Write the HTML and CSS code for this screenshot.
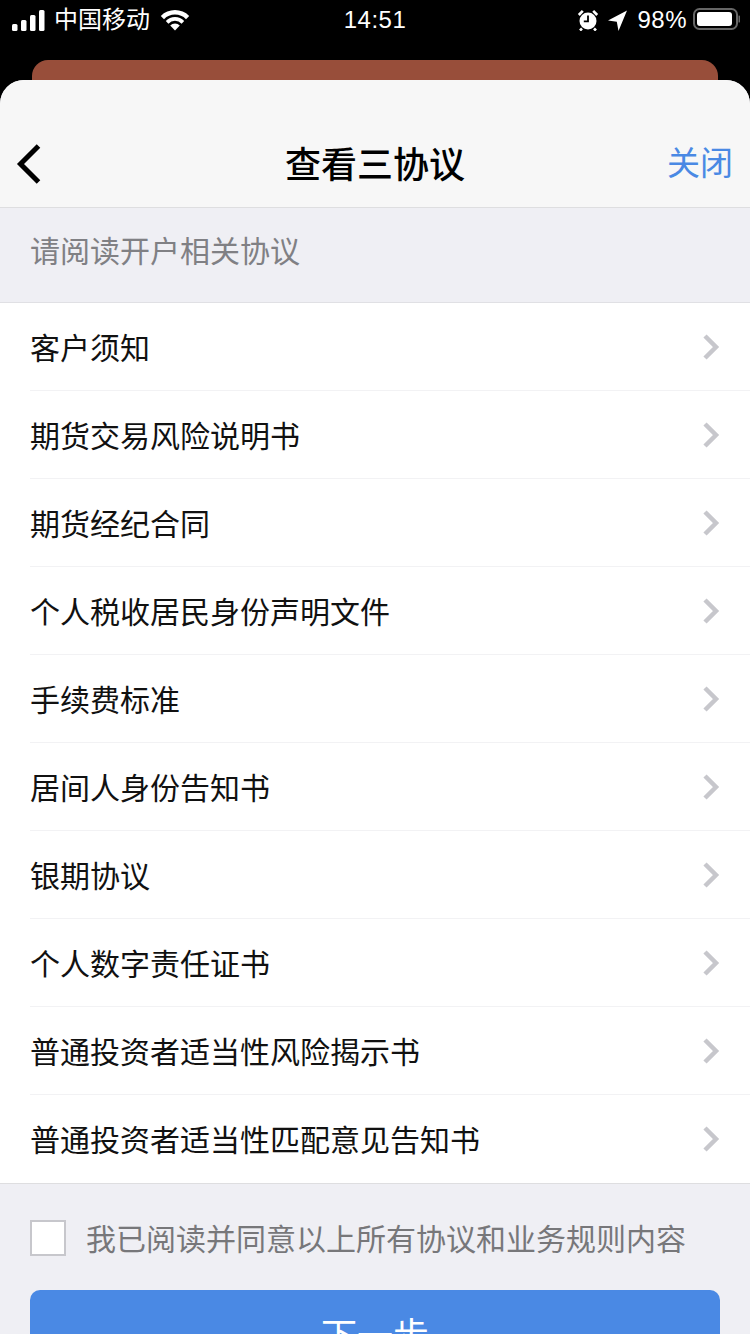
FILE: index.html
```html
<!DOCTYPE html>
<html lang="zh">
<head>
<meta charset="utf-8">
<title>查看三协议</title>
<link rel="stylesheet" href="styles.css">
</head>
<body>
<div class="page">
  <div class="status">
    <div class="status-left">
      <svg class="signal" width="34" height="22" viewBox="0 0 34 22"><rect x="0" y="14" width="5.500" height="7" rx="1.500"/><rect x="9" y="10" width="5.500" height="11" rx="1.500"/><rect x="18" y="5" width="5.500" height="16" rx="1.500"/><rect x="27" y="0" width="5.500" height="21" rx="1.500"/></svg>
      <span class="carrier">中国移动</span>
      <svg class="wifi" width="30" height="22" viewBox="0 0 30 22"><path d="M15 21.500l-4.800-5a6.600 6.600 0 0 1 9.600 0z"/><path d="M8.400 14.700l-2.600-2.700a12.800 12.800 0 0 1 18.400 0l-2.600 2.700a9 9 0 0 0-13.200 0z"/><path d="M4 10.200L.8 6.900a20 20 0 0 1 28.400 0L26 10.200a15.500 15.500 0 0 0-22 0z"/></svg>
    </div>
    <div class="time">14:51</div>
    <div class="status-right">
      <svg width="22" height="22" viewBox="0 0 22 22"><circle cx="11" cy="12" r="8.500" fill="#fff"/><path d="M11 6.500v5.800H6.800" fill="none" stroke="#000" stroke-width="1.800"/><path d="M1.800 6l4-4.200M20.200 6l-4-4.200M5 19.500L3 21.500M17 19.500l2 2" stroke="#fff" stroke-width="2.600"/></svg>
      <svg class="loc" width="20" height="22" viewBox="0 0 20 22"><path d="M20 1.500L1 11.500l8.800 1.200L11.500 22z" fill="#fff"/></svg>
      <span class="pct">98%</span>
      <svg class="batt" width="48" height="24" viewBox="0 0 48 24"><rect x="2" y="1" width="43" height="20" rx="5.500" fill="none" stroke="#666" stroke-width="2"/><rect x="5" y="4" width="35" height="14" rx="3" fill="#fff"/><path d="M46.500 7.500a3.500 3.500 0 0 1 0 7z" fill="#666"/></svg>
    </div>
  </div>
  <div class="peek"></div>
  <main class="sheet">
    <header class="nav">
      <svg class="back" width="28" height="42" viewBox="0 0 28 42"><path d="M24.500 3L6.500 21l18 18" fill="none" stroke="#000" stroke-width="5"/></svg>
      <h1 class="title">查看三协议</h1>
      <span class="close">关闭</span>
    </header>
    <div class="section-head">请阅读开户相关协议</div>
    <ul class="list">
      <li class="row"><span>客户须知</span><svg class="chev" width="18" height="26" viewBox="0 0 18 26"><path d="M2 2l11 11L2 24" fill="none" stroke="#c7c7cc" stroke-width="4.500"/></svg></li>
      <li class="row"><span>期货交易风险说明书</span><svg class="chev" width="18" height="26" viewBox="0 0 18 26"><path d="M2 2l11 11L2 24" fill="none" stroke="#c7c7cc" stroke-width="4.500"/></svg></li>
      <li class="row"><span>期货经纪合同</span><svg class="chev" width="18" height="26" viewBox="0 0 18 26"><path d="M2 2l11 11L2 24" fill="none" stroke="#c7c7cc" stroke-width="4.500"/></svg></li>
      <li class="row"><span>个人税收居民身份声明文件</span><svg class="chev" width="18" height="26" viewBox="0 0 18 26"><path d="M2 2l11 11L2 24" fill="none" stroke="#c7c7cc" stroke-width="4.500"/></svg></li>
      <li class="row"><span>手续费标准</span><svg class="chev" width="18" height="26" viewBox="0 0 18 26"><path d="M2 2l11 11L2 24" fill="none" stroke="#c7c7cc" stroke-width="4.500"/></svg></li>
      <li class="row"><span>居间人身份告知书</span><svg class="chev" width="18" height="26" viewBox="0 0 18 26"><path d="M2 2l11 11L2 24" fill="none" stroke="#c7c7cc" stroke-width="4.500"/></svg></li>
      <li class="row"><span>银期协议</span><svg class="chev" width="18" height="26" viewBox="0 0 18 26"><path d="M2 2l11 11L2 24" fill="none" stroke="#c7c7cc" stroke-width="4.500"/></svg></li>
      <li class="row"><span>个人数字责任证书</span><svg class="chev" width="18" height="26" viewBox="0 0 18 26"><path d="M2 2l11 11L2 24" fill="none" stroke="#c7c7cc" stroke-width="4.500"/></svg></li>
      <li class="row"><span>普通投资者适当性风险揭示书</span><svg class="chev" width="18" height="26" viewBox="0 0 18 26"><path d="M2 2l11 11L2 24" fill="none" stroke="#c7c7cc" stroke-width="4.500"/></svg></li>
      <li class="row"><span>普通投资者适当性匹配意见告知书</span><svg class="chev" width="18" height="26" viewBox="0 0 18 26"><path d="M2 2l11 11L2 24" fill="none" stroke="#c7c7cc" stroke-width="4.500"/></svg></li>
    </ul>
    <footer class="foot">
      <label class="agree"><span class="box"></span><span class="agree-text">我已阅读并同意以上所有协议和业务规则内容</span></label>
      <button class="next">下一步</button>
    </footer>
  </main>
</div>
</body>
</html>
```
FILE: styles.css
```css
* { box-sizing: border-box; }
html, body { margin: 0; padding: 0; background: #000; }
body { font-family: "Liberation Sans", "Noto Sans CJK SC", sans-serif; }
.page { width: 750px; height: 1334px; overflow: hidden; display: flex; flex-direction: column; }
.status { height: 60px; flex: none; position: relative; display: flex; justify-content: space-between; align-items: flex-start; padding: 8px 10px 0 12px; color: #fff; }
.status-left { display: flex; align-items: center; height: 24px; }
.signal { fill: #fff; margin-top: 1px; }
.carrier { font-size: 24px; margin-left: 8px; line-height: 24px; }
.wifi { fill: #fff; margin-left: 10px; }
.time { position: absolute; left: 0; right: 0; top: 8px; text-align: center; font-size: 24px; line-height: 24px; letter-spacing: 0.5px; }
.status-right { display: flex; align-items: center; height: 24px; }
.loc { margin-left: 8px; }
.pct { font-size: 24px; line-height: 24px; margin-left: 10px; letter-spacing: 0.5px; }
.batt { margin-left: 5px; }
.peek { height: 20px; flex: none; margin: 0 32px; background: #984e3a; border-radius: 16px 16px 0 0; }
.sheet { flex: 1; min-height: 0; background: #efeff4; border-radius: 24px 24px 0 0; overflow: hidden; display: flex; flex-direction: column; }
.nav { height: 128px; flex: none; background: #f7f7f7; border-bottom: 1px solid #dedee0; display: flex; align-items: center; justify-content: space-between; padding: 41px 17px 0 14px; position: relative; }
.back { display: block; }
.title { position: absolute; left: 0; right: 0; top: 64px; margin: 0; text-align: center; font-size: 36px; line-height: 44px; font-weight: 500; color: #000; }
.close { font-size: 33px; line-height: 44px; color: #4a89e4; }
.section-head { height: 95px; flex: none; padding: 0 30px 12px; display: flex; align-items: center; font-size: 30px; color: #808084; border-bottom: 1px solid #e0e0e4; }
.list { list-style: none; margin: 0; padding: 0 0 0 30px; background: #fff; flex: none; border-bottom: 1px solid #dedee0; }
.row { height: 88px; display: flex; align-items: center; justify-content: space-between; padding: 0 29px 2px 0; font-size: 30px; color: #111; border-bottom: 1px solid #f2f2f4; }
.row:last-child { border-bottom: 0; }
.chev { display: block; margin-top: 2px; }
.foot { flex: 1; padding: 36px 30px 0; display: flex; flex-direction: column; }
.agree { display: flex; align-items: center; font-size: 30px; color: #77777a; height: 36px; }
.agree-text { margin-top: -2px; }
.box { width: 36px; height: 36px; background: #fff; border: 2px solid #c7c7cc; margin-right: 20px; flex: none; }
.next { margin-top: 34px; height: 88px; flex: none; background: #4a89e4; border: 0; border-radius: 10px; color: #fff; font: inherit; font-size: 36px; padding: 0 0 2px; }
```
